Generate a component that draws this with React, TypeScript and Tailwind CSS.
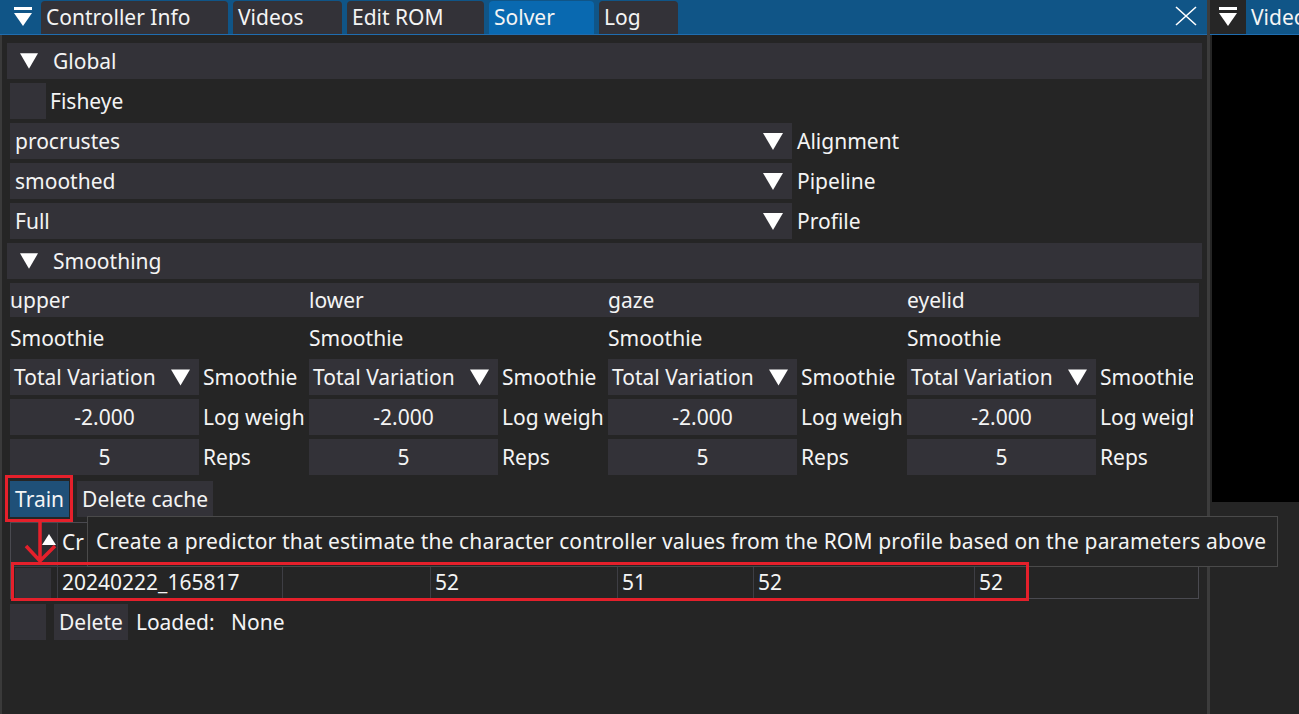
import { ReactNode } from "react";

const cols = ["upper", "lower", "gaze", "eyelid"];
const colWidths = ["w-[299px]", "w-[299px]", "w-[299px]", "w-[290px]"];

function Tri({ className = "" }: { className?: string }) {
    return (
        <svg viewBox="0 0 20 17" className={className} aria-hidden="true">
            <polygon points="0,0 20,0 10,17" fill="#ffffff" />
        </svg>
    );
}

function CollapseIcon() {
    return (
        <svg viewBox="0 0 18 20" className="w-[18px] h-[20px]" aria-hidden="true">
            <rect x="0" y="0" width="18" height="3" fill="#ffffff" />
            <polygon points="0,6 18,6 9,19" fill="#ffffff" />
        </svg>
    );
}

function Header({ label }: { label: string }) {
    return (
        <div className="-mx-[3px] h-[36px] bg-[#333238] flex items-center pl-[13px]">
            <Tri className="w-[18px] h-[16px]" />
            <span className="ml-[15px]">{label}</span>
        </div>
    );
}

function Box({ className = "", children }: { className?: string; children?: ReactNode }) {
    return <div className={"h-[36px] bg-[#333238] flex items-center " + className}>{children}</div>;
}

function Combo({ value, label }: { value: string; label: string }) {
    return (
        <div className="flex items-center h-[36px]">
            <Box className="w-[782px] pl-[5px] pr-[9px] justify-between">
                <span>{value}</span>
                <Tri className="w-[20px] h-[17px]" />
            </Box>
            <span className="ml-[5px]">{label}</span>
        </div>
    );
}

function Tab({ label, width, active = false }: { label: string; width: string; active?: boolean }) {
    return (
        <div className={`${width} h-[33px] rounded-t-[4px] pl-[5px] pb-[1px] flex items-center ${active ? "bg-[#0969b0]" : "bg-[#333238]"}`}>
            {label}
        </div>
    );
}

function SmoothingColumn({ width }: { width: string }) {
    return (
        <div className={`${width} shrink-0 pr-[4px] flex flex-col`}>
            <div className="h-[36px] mt-[3px] flex items-center">Smoothie</div>
            <div className="overflow-hidden flex flex-col gap-[4px] mt-[3px]">
                <div className="flex items-center h-[36px] whitespace-nowrap">
                    <Box className="w-[189px] shrink-0 pl-[4px] pr-[9px] justify-between">
                        <span>Total Variation</span>
                        <Tri className="w-[19px] h-[17px]" />
                    </Box>
                    <span className="ml-[4px]">Smoothie</span>
                </div>
                <div className="flex items-center h-[36px] whitespace-nowrap">
                    <Box className="w-[189px] shrink-0 justify-center">-2.000</Box>
                    <span className="ml-[4px]">Log weight</span>
                </div>
                <div className="flex items-center h-[36px] whitespace-nowrap">
                    <Box className="w-[189px] shrink-0 justify-center">5</Box>
                    <span className="ml-[4px]">Reps</span>
                </div>
            </div>
        </div>
    );
}

function ResultTable() {
    const cells = [
        { w: "w-[225px]", text: "20240222_165817" },
        { w: "w-[148px]", text: "" },
        { w: "w-[187px]", text: "52" },
        { w: "w-[136px]", text: "51" },
        { w: "w-[221px]", text: "52" },
        { w: "flex-1", text: "52" },
    ];
    return (
        <div className="mt-[5px] h-[77px] border border-[#4a4a50] flex flex-col">
            <div className="h-[44px] flex">
                <div className="w-[47px] bg-[#2c2c30] border-r border-[#3e3e44] flex justify-end pr-[1px] pt-[11px]">
                    <svg viewBox="0 0 14 11" className="w-[14px] h-[11px]" aria-hidden="true">
                        <polygon points="7,0 14,11 0,11" fill="#ffffff" />
                    </svg>
                </div>
                <div className="flex items-center pl-[4px] pb-[4px]">Cr</div>
            </div>
            <div className="flex-1 flex border-t border-[#3e3e44]">
                <div className="w-[47px] border-r border-[#3e3e44] flex items-start pl-[4px] pt-[1px]">
                    <div className="w-[36px] h-[30px] bg-[#333238]" />
                </div>
                {cells.map((c, i) => (
                    <div key={i} className={`${c.w} ${i < cells.length - 1 ? "border-r border-[#3e3e44]" : ""} pl-[4px] flex items-center`}>
                        {c.text}
                    </div>
                ))}
            </div>
        </div>
    );
}

export default function App() {
    return (
        <div className="w-[1299px] h-[714px] bg-[#252525] text-[#f4f4f4] text-[21px] leading-none flex relative overflow-hidden font-['Noto_Sans','Open_Sans',sans-serif]">
            {/* left window */}
            <div className="w-[1207px] shrink-0 flex flex-col">
                <div className="h-[35px] bg-[#105587] border-b border-[#1f6db0] flex items-end">
                    <div className="w-[36px] h-[34px] ml-[5px] flex items-center justify-center">
                        <CollapseIcon />
                    </div>
                    <div className="flex gap-[5px]">
                        <Tab label="Controller Info" width="w-[187px]" />
                        <Tab label="Videos" width="w-[109px]" />
                        <Tab label="Edit ROM" width="w-[137px]" />
                        <Tab label="Solver" width="w-[105px]" active />
                        <Tab label="Log" width="w-[79px]" />
                    </div>
                    <div className="flex-1" />
                    <svg viewBox="0 0 22 20" className="w-[22px] h-[20px] mb-[8px] mr-[10px]" aria-hidden="true">
                        <path d="M1 1 L21 19 M21 1 L1 19" stroke="#ffffff" strokeWidth="1.6" />
                    </svg>
                </div>
                <div className="flex-1 border-l-2 border-[#3a3a3a] pl-[8px] pr-[8px] pt-[8px] flex flex-col">
                    <div className="flex flex-col gap-[4px]">
                        <Header label="Global" />
                        <div className="flex items-center h-[36px]">
                            <Box className="w-[36px]" />
                            <span className="ml-[4px]">Fisheye</span>
                        </div>
                        <Combo value="procrustes" label="Alignment" />
                        <Combo value="smoothed" label="Pipeline" />
                        <Combo value="Full" label="Profile" />
                        <Header label="Smoothing" />
                    </div>
                    <div className="mt-[4px] h-[34px] bg-[#333238] flex">
                        {cols.map((c, i) => (
                            <div key={c} className={`${colWidths[i]} shrink-0 flex items-center`}>{c}</div>
                        ))}
                    </div>
                    <div className="flex">
                        {cols.map((c, i) => (
                            <SmoothingColumn key={c} width={colWidths[i]} />
                        ))}
                    </div>
                    <div className="mt-[6px] flex gap-[8px]">
                        <div className="h-[36px] px-[5px] bg-[#1f5078] flex items-center">Train</div>
                        <div className="h-[36px] px-[5px] bg-[#333238] flex items-center">Delete cache</div>
                    </div>
                    <ResultTable />
                    <div className="mt-[5px] flex items-center h-[36px]">
                        <Box className="w-[36px]" />
                        <div className="ml-[8px] h-[36px] px-[5px] bg-[#333238] flex items-center">Delete</div>
                        <span className="ml-[8px] whitespace-pre">Loaded:   None</span>
                    </div>
                </div>
            </div>

            <div className="w-[3px] shrink-0 bg-[#3c3c3c]" />

            {/* right window */}
            <div className="flex-1 min-w-0 flex flex-col">
                <div className="h-[35px] bg-[#105587] border-b border-[#1f6db0] flex items-end">
                    <div className="w-[36px] h-[34px] shrink-0 bg-[#262626] flex items-center justify-center">
                        <CollapseIcon />
                    </div>
                    <div className="ml-[1px] h-[33px] flex-1 min-w-0 rounded-tl-[4px] bg-[#105587] pl-[4px] pb-[1px] flex items-center overflow-hidden whitespace-nowrap">Videos</div>
                </div>
                <div className="h-[467px] ml-[2px] bg-black" />
            </div>

            {/* tooltip */}
            <div className="absolute left-[87px] top-[516px] w-[1191px] h-[51px] bg-[#252525] border border-[#4a4a4a] flex items-center pl-[8px] whitespace-nowrap tracking-[0.15px]">
                Create a predictor that estimate the character controller values from the ROM profile based on the parameters above
            </div>

            {/* red annotations */}
            <div className="absolute left-[5px] top-[475px] w-[68px] h-[47px] border-[3px] border-[#e5202b]" />
            <div className="absolute left-[11px] top-[562px] w-[1018px] h-[39px] border-[3px] border-[#e5202b]" />
            <svg className="absolute left-[20px] top-[521px] w-[42px] h-[44px]" viewBox="0 0 42 44" aria-hidden="true">
                <path d="M20 0 L20 40 M6 25 L20 40 L35 25" stroke="#e5202b" strokeWidth="3.5" fill="none" />
            </svg>
        </div>
    );
}
